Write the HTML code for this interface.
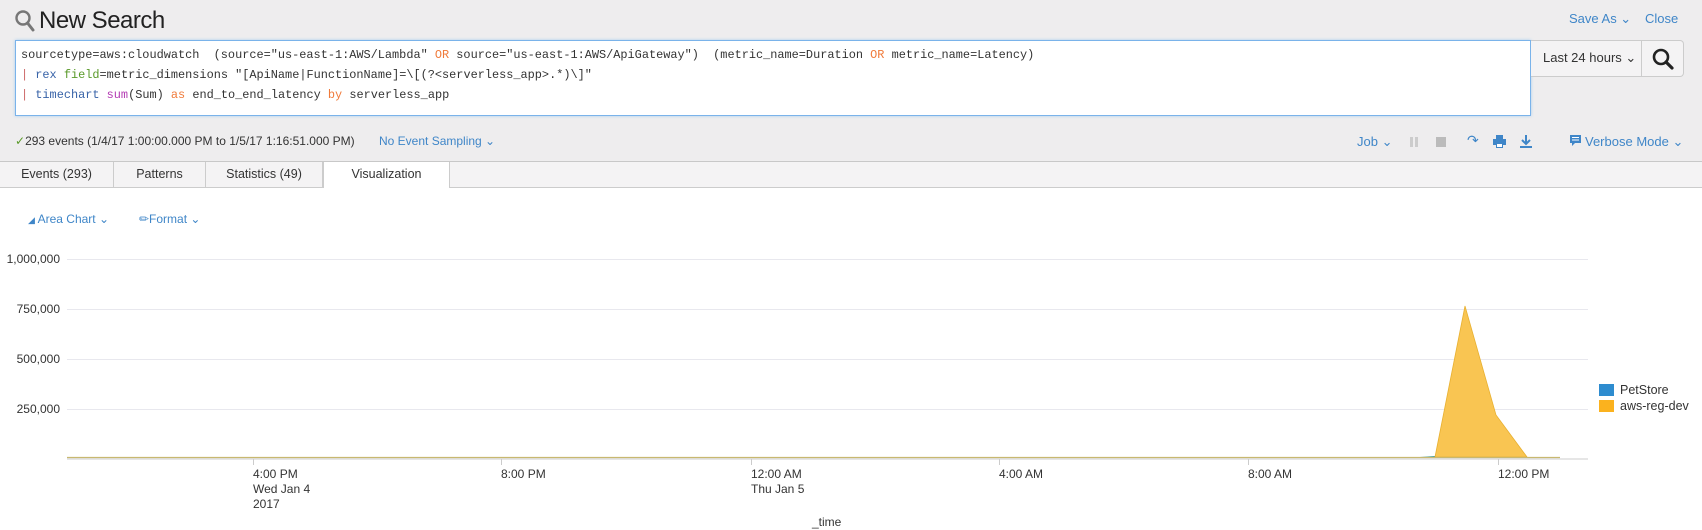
<!DOCTYPE html>
<html><head><meta charset="utf-8"><style>
*{margin:0;padding:0;box-sizing:border-box}
body{width:1702px;height:530px;overflow:hidden;background:#fff;font-family:"Liberation Sans",sans-serif;position:relative}
.a{position:absolute;white-space:nowrap}
.blue{color:#3f86c8}
.mono{font-family:"Liberation Mono",monospace;font-size:11.9px;color:#333;white-space:pre}
.tab{position:absolute;top:162px;height:25px;font-size:12.5px;color:#333;line-height:25px;text-align:center}
.yl{position:absolute;right:1642px;font-size:12px;color:#333;text-align:right}
.xl{position:absolute;font-size:12px;color:#333;line-height:15px}
</style></head><body>
<div class="a" style="left:0;top:0;width:1702px;height:162px;background:#eeedee"></div>
<svg class="a" style="left:14px;top:9px" width="22" height="24" viewBox="0 0 22 24"><circle cx="9" cy="9" r="6.5" fill="none" stroke="#777" stroke-width="2.4"/><path d="M13.5 14 L19 21" stroke="#777" stroke-width="3" stroke-linecap="round"/></svg>
<div class="a" style="left:39px;top:7px;font-size:24px;color:#222;letter-spacing:-0.5px">New Search</div>
<div class="a blue" style="left:1569px;top:11px;font-size:13px">Save As &#8964;</div>
<div class="a blue" style="left:1645px;top:11px;font-size:13px">Close</div>
<div class="a" style="left:15px;top:40px;width:1516px;height:76px;background:#fff;border:1px solid #7ab3ea;box-shadow:0 0 3px #a9cdf0"></div>
<div class="a mono" style="left:21px;top:48px">sourcetype=aws:cloudwatch  (source="us-east-1:AWS/Lambda" <span style="color:#f07a3a">OR</span> source="us-east-1:AWS/ApiGateway")  (metric_name=Duration <span style="color:#f07a3a">OR</span> metric_name=Latency)</div>
<div class="a mono" style="left:21px;top:68px"><span style="color:#c66">|</span> <span style="color:#3863a8">rex</span> <span style="color:#5a9a2a">field</span>=metric_dimensions "[ApiName|FunctionName]=\[(?&lt;serverless_app&gt;.*)\]"</div>
<div class="a mono" style="left:21px;top:88px"><span style="color:#c66">|</span> <span style="color:#3863a8">timechart</span> <span style="color:#b33ab3">sum</span>(Sum) <span style="color:#f07a3a">as</span> end_to_end_latency <span style="color:#f07a3a">by</span> serverless_app</div>
<div class="a" style="left:1531px;top:40px;width:153px;height:37px;background:#f4f3f4;border:1px solid #ccc;border-left:none;border-radius:0 4px 4px 0"></div>
<div class="a" style="left:1641px;top:40px;width:1px;height:37px;background:#ccc"></div>
<div class="a" style="left:1543px;top:50px;font-size:13px;color:#333">Last 24 hours &#8964;</div>
<svg class="a" style="left:1651px;top:47px" width="24" height="24" viewBox="0 0 24 24"><circle cx="10" cy="10" r="7" fill="none" stroke="#222" stroke-width="2.6"/><path d="M15 15 L21 21" stroke="#222" stroke-width="3.2" stroke-linecap="round"/></svg>
<div class="a" style="left:15px;top:134px;font-size:12px;color:#333"><span style="color:#5a9a2a">&#10003;</span>293 events (1/4/17 1:00:00.000 PM to 1/5/17 1:16:51.000 PM)</div>
<div class="a blue" style="left:379px;top:134px;font-size:12px">No Event Sampling &#8964;</div>
<div class="a blue" style="left:1357px;top:134px;font-size:13px">Job &#8964;</div>
<div class="a" style="left:1410px;top:137px;width:3px;height:10px;background:#ccc"></div><div class="a" style="left:1415px;top:137px;width:3px;height:10px;background:#ccc"></div>
<div class="a" style="left:1436px;top:137px;width:10px;height:10px;background:#bbb"></div>
<div class="a blue" style="left:1467px;top:132px;font-size:14px">&#8631;</div>
<svg class="a" style="left:1493px;top:135px" width="13" height="13" viewBox="0 0 13 13"><rect x="3" y="0" width="7" height="4" fill="#3f86c8"/><rect x="0" y="4" width="13" height="6" fill="#3f86c8"/><rect x="3" y="8" width="7" height="5" fill="#3f86c8"/><rect x="4" y="9" width="5" height="3" fill="#fff"/></svg>
<svg class="a" style="left:1520px;top:135px" width="12" height="13" viewBox="0 0 12 13"><path d="M6 0V9M2 5L6 9L10 5M0 12H12" stroke="#3f86c8" stroke-width="2" fill="none"/></svg>
<svg class="a" style="left:1570px;top:135px" width="11" height="12" viewBox="0 0 11 12"><path d="M0 0H11V8H5L2 11V8H0Z" fill="#3f86c8"/><path d="M2 2.5H9M2 5H9" stroke="#fff" stroke-width="1"/></svg>
<div class="a blue" style="left:1585px;top:134px;font-size:13px">Verbose Mode &#8964;</div>
<div class="a" style="left:0;top:161px;width:1702px;height:27px;background:#f4f3f4;border-top:1px solid #c8c8c8;border-bottom:1px solid #ccc"></div>
<div class="tab" style="left:0;width:114px;border-right:1px solid #ccc">Events (293)</div>
<div class="tab" style="left:114px;width:92px;border-right:1px solid #ccc">Patterns</div>
<div class="tab" style="left:206px;width:117px;border-right:1px solid #ccc">Statistics (49)</div>
<div class="tab" style="left:323px;width:127px;height:26px;background:#fff;border-left:1px solid #ccc;border-right:1px solid #ccc">Visualization</div>
<div class="a blue" style="left:28px;top:212px;font-size:12px"><span style="font-size:9px">&#9698;</span> Area Chart &#8964;</div>
<div class="a blue" style="left:139px;top:212px;font-size:12px">&#9999;Format &#8964;</div>
<svg class="a" style="left:0;top:0" width="1702" height="530">
<g stroke="#e8e8ee" stroke-width="1"><line x1="67" y1="259.5" x2="1588" y2="259.5"/><line x1="67" y1="309.5" x2="1588" y2="309.5"/><line x1="67" y1="359.5" x2="1588" y2="359.5"/><line x1="67" y1="409.5" x2="1588" y2="409.5"/></g>
<path d="M1420 457 L1435 456 L1436 457Z" fill="#3b9a9a"/>
<path d="M1435 457 L1465 306 L1496 415 L1527 457Z" fill="#f9c552" stroke="#e8b030" stroke-width="0.8"/>
<line x1="67" y1="457.5" x2="1560" y2="457.5" stroke="#c8b870" stroke-width="1.2"/>
<line x1="67" y1="459" x2="1588" y2="459" stroke="#ccc"/>
<g stroke="#ccc"><line x1="253.5" y1="459" x2="253.5" y2="465"/><line x1="501.5" y1="459" x2="501.5" y2="465"/><line x1="751.5" y1="459" x2="751.5" y2="465"/><line x1="999.5" y1="459" x2="999.5" y2="465"/><line x1="1248.5" y1="459" x2="1248.5" y2="465"/><line x1="1498.5" y1="459" x2="1498.5" y2="465"/></g>
<rect x="1599" y="384" width="15" height="12" fill="#2e8ccf"/><rect x="1599" y="400" width="15" height="12" fill="#fbb21e"/>
</svg>
<div class="yl" style="top:252px">1,000,000</div>
<div class="yl" style="top:302px">750,000</div>
<div class="yl" style="top:352px">500,000</div>
<div class="yl" style="top:402px">250,000</div>
<div class="xl" style="left:253px;top:467px">4:00 PM<br>Wed Jan 4<br>2017</div>
<div class="xl" style="left:501px;top:467px">8:00 PM</div>
<div class="xl" style="left:751px;top:467px">12:00 AM<br>Thu Jan 5</div>
<div class="xl" style="left:999px;top:467px">4:00 AM</div>
<div class="xl" style="left:1248px;top:467px">8:00 AM</div>
<div class="xl" style="left:1498px;top:467px">12:00 PM</div>
<div class="xl" style="left:812px;top:515px">_time</div>
<div class="xl" style="left:1620px;top:383px;font-size:12.5px">PetStore</div>
<div class="xl" style="left:1620px;top:399px;font-size:12.5px">aws-reg-dev</div>
</body></html>
